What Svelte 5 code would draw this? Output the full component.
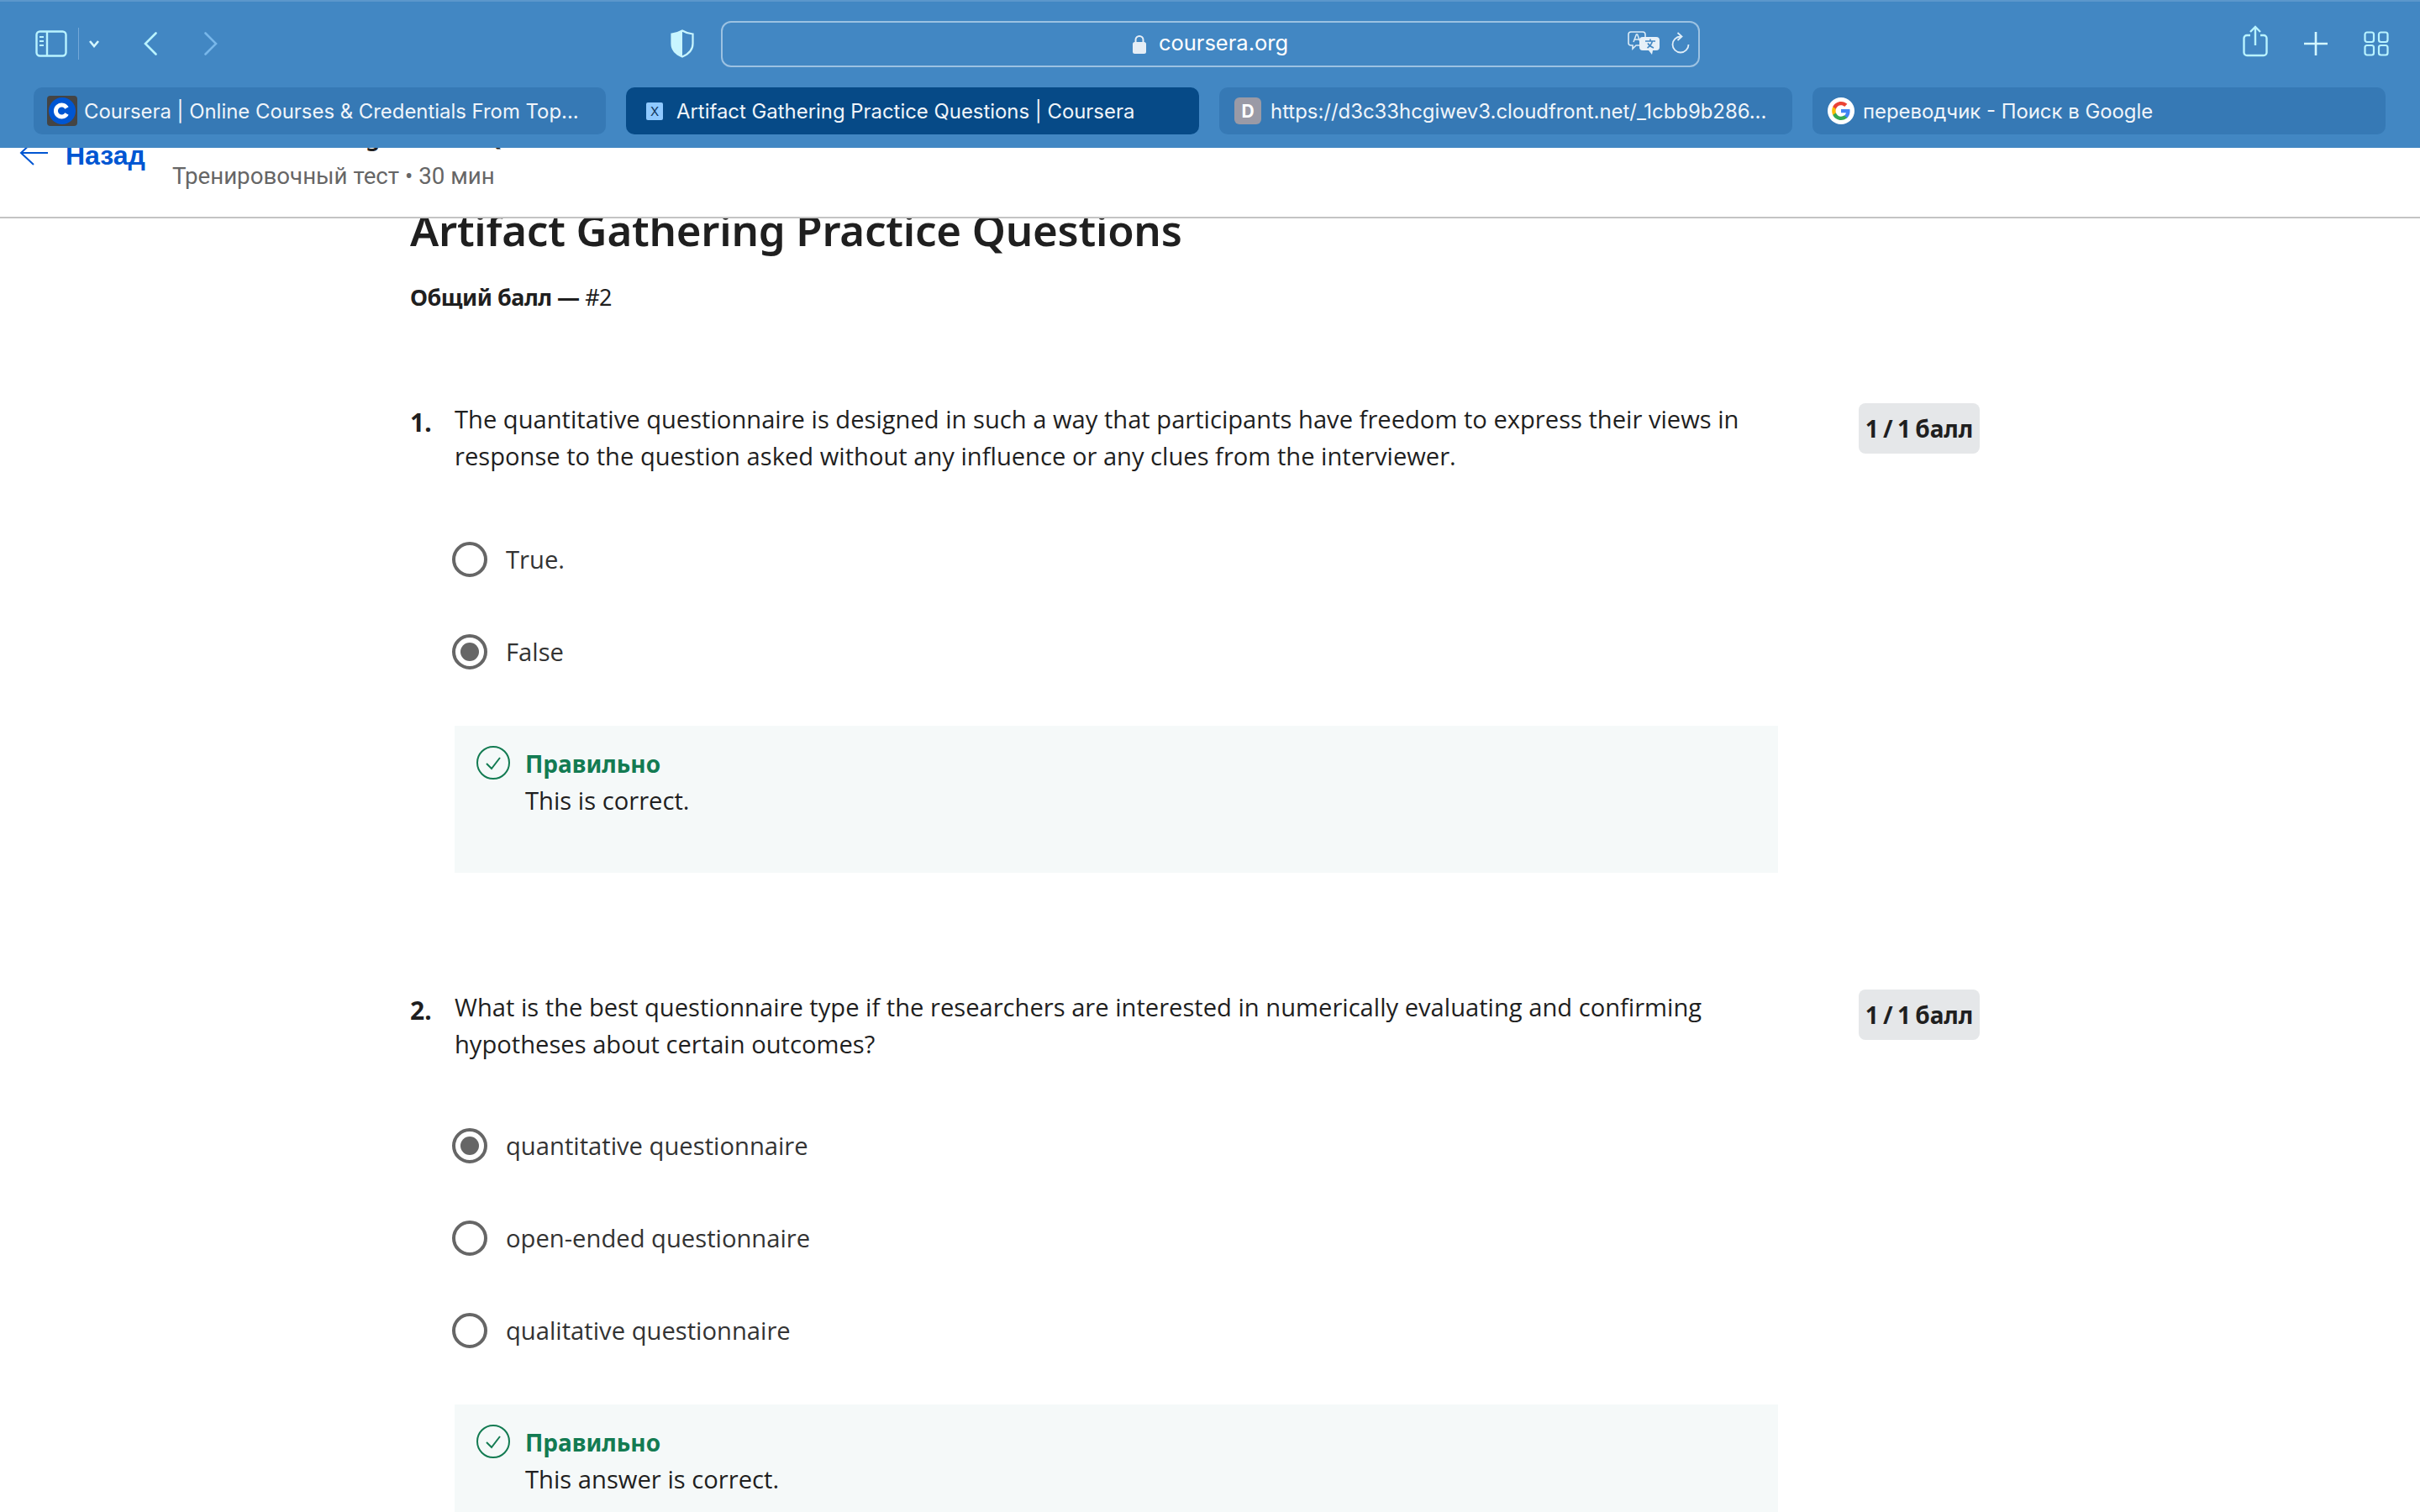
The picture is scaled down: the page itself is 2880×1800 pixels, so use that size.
<script>
  const tabs = [
    { kind: "c", title: "Coursera | Online Courses & Credentials From Top..." },
    { kind: "x", title: "Artifact Gathering Practice Questions | Coursera", active: true },
    { kind: "d", title: "https://d3c33hcgiwev3.cloudfront.net/_1cbb9b286..." },
    { kind: "g", title: "переводчик - Поиск в Google" },
  ];

  const questions = [
    {
      n: 1,
      text: "The quantitative questionnaire is designed in such a way that participants have freedom to express their views in response to the question asked without any influence or any clues from the interviewer.",
      options: ["True.", "False"],
      picked: 1,
      note: "This is correct.",
    },
    {
      n: 2,
      text: "What is the best questionnaire type if the researchers are interested in numerically evaluating and confirming hypotheses about certain outcomes?",
      options: ["quantitative questionnaire", "open-ended questionnaire", "qualitative questionnaire"],
      picked: 0,
      note: "This answer is correct.",
    },
  ];
</script>

<div class="screen">
  <div class="chrome">
    <div class="toolbar">
      <svg class="ic" width="38" height="32" viewBox="0 0 38 32" fill="none" stroke="#b9f3ff" stroke-width="2.4">
        <rect x="1.5" y="1.5" width="35" height="29" rx="4" />
        <path d="M14 2v28" />
        <path d="M5 8h5M5 13h5M5 18h5" stroke-width="2" />
      </svg>
      <span class="divider"></span>
      <svg class="ic chev" width="14" height="10" viewBox="0 0 14 10" fill="none" stroke="#d4f7ff" stroke-width="2.6">
        <path d="M2 2l5 6 5-6" />
      </svg>
      <svg class="ic back" width="16" height="28" viewBox="0 0 16 28" fill="none" stroke="#b9f3ff" stroke-width="2.6" stroke-linecap="round">
        <path d="M14.5 1.5L2 14l12.5 12.5" />
      </svg>
      <svg class="ic fwd" width="16" height="28" viewBox="0 0 16 28" fill="none" stroke="#78b7ea" stroke-width="2.6" stroke-linecap="round">
        <path d="M1.5 1.5L14 14 1.5 26.5" />
      </svg>
      <svg class="ic shield" width="28" height="34" viewBox="0 0 28 34">
        <path d="M14 1.5C18 4 22 5 26.5 5.5V17C26.5 25 20 30 14 32.5 8 30 1.5 25 1.5 17V5.5C6 5 10 4 14 1.5Z" fill="none" stroke="#c8f5ff" stroke-width="2.2" />
        <path d="M14 1.5C10 4 6 5 1.5 5.5V17C1.5 25 8 30 14 32.5Z" fill="#c8f5ff" />
      </svg>
      <div class="address">
        <div class="host">
          <svg width="16" height="23" viewBox="0 0 16 23">
            <path d="M3.5 10V6.5a4.5 4.5 0 0 1 9 0V10" fill="none" stroke="#e6eef6" stroke-width="2" />
            <rect x="0" y="9" width="16" height="14" rx="2.5" fill="#e6eef6" />
          </svg>
          <span>coursera.org</span>
        </div>
        <svg class="translate" width="38" height="28" viewBox="0 0 38 28">
          <path d="M4 1h14a3 3 0 0 1 3 3v10a3 3 0 0 1-3 3H10l-4 4v-4H4a3 3 0 0 1-3-3V4a3 3 0 0 1 3-3Z" fill="none" stroke="#dcecf7" stroke-width="1.6" />
          <path d="M7 13l3.4-9h1.2L15 13M8.4 10h5.2" fill="none" stroke="#dcecf7" stroke-width="1.5" />
          <path d="M18 7h16a4 4 0 0 1 4 4v8a4 4 0 0 1-4 4h-4l-1 5-4-5h-7a4 4 0 0 1-4-4v-8a4 4 0 0 1 4-4Z" fill="#e6f0f8" />
          <path d="M21 12h12M27 9.500V12M23.500 20c3-2 5-4.500 6-8M24 14.500c1.500 2.500 4 4.500 7 5.500" fill="none" stroke="#4287c3" stroke-width="1.6" />
        </svg>
        <svg class="reload" width="22" height="26" viewBox="0 0 22 26" fill="none" stroke="#e0eef8" stroke-width="1.8">
          <path d="M11 5.500a9.500 9.500 0 1 0 9.500 9.500" />
          <path d="M7.500 1l5 4.500-5 4.500" />
        </svg>
      </div>
      <svg class="ic share" width="30" height="38" viewBox="0 0 30 38" fill="none" stroke="#b9f3ff" stroke-width="2.4">
        <path d="M9 12H5a3.500 3.500 0 0 0-3.500 3.500v17A3.500 3.500 0 0 0 5 36h20a3.500 3.500 0 0 0 3.500-3.500v-17A3.500 3.500 0 0 0 25 12h-4" />
        <path d="M15 24V2M9 8l6-6 6 6" />
      </svg>
      <svg class="ic plus" width="28" height="28" viewBox="0 0 28 28" stroke="#d4f7ff" stroke-width="2.6">
        <path d="M14 0v28M0 14h28" />
      </svg>
      <svg class="ic grid" width="30" height="30" viewBox="0 0 30 30" fill="none" stroke="#b9f3ff" stroke-width="2.2">
        <rect x="1.500" y="1.500" width="10.500" height="11.500" rx="2.500" />
        <rect x="18" y="1.500" width="10.500" height="11.500" rx="2.500" />
        <rect x="1.500" y="17" width="10.500" height="11.500" rx="2.500" />
        <rect x="18" y="17" width="10.500" height="11.500" rx="2.500" />
      </svg>
    </div>

    <div class="tabs">
      {#each tabs as tab}
        <div class="tab tab-{tab.kind}" class:active={tab.active}>
          {#if tab.kind === "c"}
            <span class="fav fav-c"><svg width="32" height="32" viewBox="0 0 32 32">
              <circle cx="16" cy="16" r="16" fill="#0056d2" />
              <path d="M21.500 19.500a7 7 0 1 1 0-7" fill="none" stroke="#fff" stroke-width="5" />
            </svg></span>
          {:else if tab.kind === "x"}
            <span class="fav fav-x">X</span>
          {:else if tab.kind === "d"}
            <span class="fav fav-d">D</span>
          {:else}
            <span class="fav fav-g"><svg width="24" height="24" viewBox="0 0 48 48">
              <path fill="#4285f4" d="M45.100 24.500c0-1.600-.1-3.100-.4-4.500H24v8.600h11.800c-.5 2.700-2 5.100-4.400 6.700v5.500h7.100c4.200-3.800 6.600-9.500 6.600-16.300z" />
              <path fill="#34a853" d="M24 46c5.900 0 10.900-2 14.500-5.300l-7.100-5.500c-2 1.300-4.500 2.100-7.400 2.100-5.700 0-10.500-3.800-12.200-9H4.500v5.700C8.100 41.200 15.500 46 24 46z" />
              <path fill="#fbbc05" d="M11.800 28.300c-.9-2.700-.9-5.900 0-8.600V14H4.500c-3 6-3 14 0 20z" />
              <path fill="#ea4335" d="M24 10.700c3.200 0 6.100 1.100 8.400 3.300l6.300-6.300C34.900 4.100 29.900 2 24 2 15.500 2 8.100 6.800 4.500 14l7.300 5.700c1.700-5.200 6.500-9 12.200-9z" />
            </svg></span>
          {/if}
          <span class="tab-title">{tab.title}</span>
        </div>
      {/each}
    </div>
  </div>

  <header class="course-head">
    <div class="back-link">
      <svg width="36" height="36" viewBox="0 0 36 36" fill="none" stroke="#0056d2" stroke-width="2">
        <path d="M35 15H3M18 1L3 15l15 14" />
      </svg>
      <span>Назад</span>
    </div>
    <div class="head-title">
      <div class="head-name">Artifact Gathering Practice Questions</div>
      <div class="head-meta">Тренировочный тест • 30 мин</div>
    </div>
  </header>

  <main class="content">
    <h1>Artifact Gathering Practice Questions</h1>
    <div class="total"><b>Общий балл —</b> <span>#2</span></div>

    {#each questions as q}
      <section class="question">
        <div class="q-head">
          <span class="q-num">{q.n}.</span>
          <p class="q-text">{q.text}</p>
          <span class="badge">1 / 1 балл</span>
        </div>
        <div class="options">
          {#each q.options as option, i}
            <div class="option">
              <span class="radio" class:checked={i === q.picked}></span>
              <span>{option}</span>
            </div>
          {/each}
        </div>
        <div class="feedback">
          <svg width="40" height="40" viewBox="0 0 40 40" fill="none" stroke="#137b52" stroke-width="2">
            <circle cx="20" cy="20" r="19" />
            <path d="M12 21l6 6 10-13" />
          </svg>
          <div>
            <div class="fb-title">Правильно</div>
            <div class="fb-text">{q.note}</div>
          </div>
        </div>
      </section>
    {/each}
  </main>
</div>

<style>
  :global(body) {
    margin: 0;
    background: #fff;
  }

  .screen {
    width: 2880px;
    height: 1800px;
    display: flex;
    flex-direction: column;
    overflow: hidden;
    background: #fff;
    font-family: "Open Sans", sans-serif;
    color: #1f1f1f;
  }

  .chrome {
    height: 176px;
    flex: none;
    box-sizing: border-box;
    background: #4287c3;
    border-top: 2px solid #5c97cc;
    position: relative;
    z-index: 1;
  }

  .toolbar {
    height: 100px;
    display: flex;
    align-items: center;
    padding-left: 42px;
  }

  .ic {
    flex: none;
  }

  .divider {
    width: 1px;
    height: 38px;
    background: #74a9d8;
    margin-left: 13px;
  }

  .chev {
    margin-left: 11px;
  }

  .back {
    margin-left: 52px;
  }

  .fwd {
    margin-left: 56px;
  }

  .shield {
    margin-left: 539px;
  }

  .address {
    width: 1165px;
    height: 55px;
    margin-left: 32px;
    box-sizing: border-box;
    border: 2px solid #9cc2e2;
    border-radius: 12px;
    display: flex;
    align-items: center;
    position: relative;
  }

  .host {
    flex: 1;
    display: flex;
    justify-content: center;
    align-items: center;
    gap: 15px;
    color: #fff;
    font: 400 25.5px Inter, sans-serif;
  }

  .host span {
    margin-bottom: 3px;
  }

  .translate {
    position: absolute;
    left: 1077px;
    top: 10px;
  }

  .reload {
    position: absolute;
    left: 1129px;
    top: 11px;
  }

  .share {
    margin-left: 646px;
    margin-top: -6px;
  }

  .plus {
    margin-left: 43px;
  }

  .grid {
    margin-left: 43px;
  }

  .tabs {
    display: flex;
    gap: 24px;
    padding: 0 40px;
    margin-top: 2px;
  }

  .tab {
    height: 56px;
    flex: none;
    display: flex;
    align-items: center;
    box-sizing: border-box;
    background: #3679b5;
    border-radius: 10px;
    color: #f0f5fa;
    font: 400 23.9px Inter, sans-serif;
    white-space: nowrap;
  }

  .tab.active {
    background: #064a87;
  }

  .tab-c {
    width: 681px;
    padding-left: 16px;
  }

  .tab-x {
    width: 682px;
    padding-left: 24px;
  }

  .tab-d {
    width: 682px;
    padding-left: 18px;
  }

  .tab-g {
    width: 682px;
    padding-left: 18px;
  }

  .fav {
    flex: none;
    display: flex;
    align-items: center;
    justify-content: center;
  }

  .fav-c {
    width: 36px;
    height: 36px;
    background: #444;
    border-radius: 4px;
    margin-right: 8px;
  }

  .fav-x {
    width: 20px;
    height: 21px;
    background: #8fc9ff;
    border-radius: 2px;
    color: #12395f;
    font: 400 15px Inter, sans-serif;
    margin-right: 16px;
  }

  .fav-d {
    width: 32px;
    height: 32px;
    background: #9a9aa6;
    border-radius: 6px;
    color: #fff;
    font: 700 21px Inter, sans-serif;
    margin-right: 11px;
  }

  .fav-g {
    width: 32px;
    height: 32px;
    background: #fff;
    border-radius: 50%;
    margin-right: 10px;
  }

  .course-head {
    height: 84px;
    flex: none;
    box-sizing: border-box;
    border-bottom: 2px solid #c4c4c4;
    display: flex;
    overflow: hidden;
    background: #fff;
    position: relative;
    z-index: 1;
  }

  .back-link {
    display: flex;
    gap: 20px;
    align-items: flex-start;
    margin: -13px 0 0 22px;
    color: #0056d2;
    font: 700 32px/44px "Liberation Sans", sans-serif;
  }

  .back-link svg {
    margin-top: 4px;
  }

  .head-title {
    margin: -32px 0 0 32px;
  }

  .head-name {
    font: 600 28px/36px "Noto Sans", sans-serif;
    color: #1f1f1f;
    white-space: nowrap;
  }

  .head-meta {
    font: 400 27.7px/36px Roboto, sans-serif;
    color: #666;
    margin-top: 12px;
  }

  .content {
    flex: 1;
    padding-left: 488px;
    width: 1868px;
    overflow: hidden;
    min-height: 0;
  }

  h1 {
    margin: -23px 0 0;
    font: 600 51px/72px "Noto Sans", sans-serif;
    color: #1f1f1f;
    letter-spacing: -0.25px;
  }

  .total {
    margin-top: 25px;
    font: 400 27px/40px "Noto Sans", sans-serif;
    letter-spacing: -0.5px;
  }

  .total b {
    font-weight: 700;
  }

  .question {
    margin-bottom: 139px;
  }

  .question:first-of-type {
    margin-top: 104px;
  }

  .q-head {
    display: flex;
    align-items: flex-start;
  }

  .q-num {
    width: 53px;
    flex: none;
    font: 700 30px/44px "Noto Sans", sans-serif;
    margin-top: 3px;
  }

  .q-text {
    width: 1575px;
    flex: none;
    margin: 0;
    font-size: 29.15px;
    line-height: 43.5px;
  }

  .badge {
    margin-left: auto;
    width: 144px;
    height: 60px;
    justify-content: center;
    box-sizing: border-box;
    background: #e5e7e9;
    border-radius: 8px;
    display: flex;
    align-items: center;
    margin-top: 2px;
    font: 700 28px "Noto Sans", sans-serif;
    word-spacing: -2px;
    white-space: nowrap;
  }

  .question + .question .badge {
    margin-top: 0;
  }

  .options {
    margin-top: 80px;
    padding-left: 50px;
    display: flex;
    flex-direction: column;
    gap: 68px;
  }

  .question + .question .options {
    margin-top: 78px;
  }

  .option {
    height: 42px;
    display: flex;
    align-items: center;
    gap: 22px;
    font-size: 29.2px;
    color: #333;
  }

  .radio {
    width: 42px;
    height: 42px;
    flex: none;
    box-sizing: border-box;
    border: 4px solid #666;
    border-radius: 50%;
    display: flex;
    align-items: center;
    justify-content: center;
  }

  .radio.checked::after {
    content: "";
    width: 22px;
    height: 22px;
    border-radius: 50%;
    background: #666;
  }

  .feedback {
    margin: 67px 0 0 53px;
    width: 1575px;
    height: 175px;
    box-sizing: border-box;
    background: #f5f9f9;
    padding: 23px 26px;
    display: flex;
    gap: 18px;
  }

  .feedback svg {
    flex: none;
    margin-top: 1px;
  }

  .fb-title {
    font: 700 28px/44px "Noto Sans", sans-serif;
    color: #137b52;
  }

  .fb-text {
    font-size: 29.2px;
    line-height: 44px;
  }
</style>
